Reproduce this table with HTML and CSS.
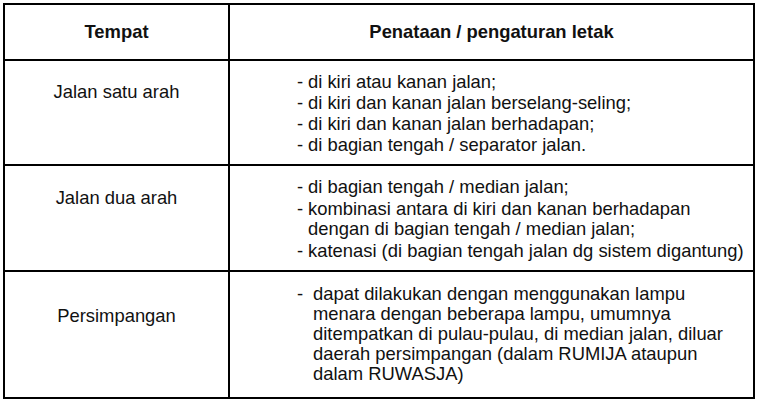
FILE: index.html
```html
<!DOCTYPE html>
<html lang="id">
<head>
<meta charset="utf-8">
<title>Penataan lampu</title>
<link rel="stylesheet" href="styles.css">
</head>
<body>
<div class="page">
  <table class="grid">
    <colgroup>
      <col class="col-place">
      <col class="col-layout">
    </colgroup>
    <thead>
      <tr class="head-row">
        <th>Tempat</th>
        <th>Penataan / pengaturan letak</th>
      </tr>
    </thead>
    <tbody>
      <tr class="row row-1">
        <td class="place">Jalan satu arah</td>
        <td class="layout">
          <div class="item"><span class="dash">-</span><span>di kiri atau kanan jalan;</span></div>
          <div class="item"><span class="dash">-</span><span>di kiri dan kanan jalan berselang-seling;</span></div>
          <div class="item"><span class="dash">-</span><span>di kiri dan kanan jalan berhadapan;</span></div>
          <div class="item"><span class="dash">-</span><span>di bagian tengah / separator jalan.</span></div>
        </td>
      </tr>
      <tr class="row row-2">
        <td class="place place-mid">Jalan dua arah</td>
        <td class="layout">
          <div class="item"><span class="dash">-</span><span>di bagian tengah / median jalan;</span></div>
          <div class="item"><span class="dash">-</span><span>kombinasi antara di kiri dan kanan berhadapan<br>dengan di bagian tengah / median jalan;</span></div>
          <div class="item"><span class="dash">-</span><span>katenasi (di bagian tengah jalan dg sistem digantung)</span></div>
        </td>
      </tr>
      <tr class="row row-3">
        <td class="place place-low">Persimpangan</td>
        <td class="layout">
          <div class="item"><span class="dash dash-wide">-</span><span>dapat dilakukan dengan menggunakan lampu<br>menara dengan beberapa lampu, umumnya<br>ditempatkan di pulau-pulau, di median jalan, diluar<br>daerah persimpangan (dalam RUMIJA ataupun<br>dalam RUWASJA)</span></div>
        </td>
      </tr>
    </tbody>
  </table>
</div>
</body>
</html>
```

FILE: styles.css
```css
html, body {
  margin: 0;
  padding: 0;
  background: #ffffff;
}

.page {
  padding: 3px 0 0 3px;
  font-family: "Liberation Sans", Arial, Helvetica, sans-serif;
  font-size: 18.4px;
  line-height: 20px;
  color: #111111;
}

.grid {
  border-collapse: separate;
  border-spacing: 0;
  table-layout: fixed;
  width: 752px;
  border-top: 2px solid #000;
  border-left: 2px solid #000;
}

.col-place { width: 225px; }
.col-layout { width: 525px; }

.grid th,
.grid td {
  border-right: 2px solid #000;
  border-bottom: 2px solid #000;
  padding: 0;
  white-space: nowrap;
}

.head-row th {
  height: 56px;
  box-sizing: border-box;
  font-weight: bold;
  text-align: center;
  vertical-align: middle;
}

.row td {
  vertical-align: top;
}

.row-1 td { height: 105px; }
.row-2 td { height: 106px; }
.row-3 td { height: 127px; }

.place {
  text-align: center;
  padding-top: 21px !important;
  box-sizing: border-box;
}

.place-mid {
  padding-top: 22px !important;
}

.place-low {
  padding-top: 34px !important;
}

.layout {
  padding-left: 67px !important;
  box-sizing: border-box;
}

.row-1 .layout { padding-top: 11px !important; }
.row-2 .layout { padding-top: 11px !important; }
.row-3 .layout { padding-top: 12px !important; }

.item {
  display: flex;
  margin-bottom: 1px;
}

.row-2 .item { margin-bottom: 2px; }

.dash {
  flex: none;
  width: 11px;
}

.dash-wide {
  width: 16px;
}
```
